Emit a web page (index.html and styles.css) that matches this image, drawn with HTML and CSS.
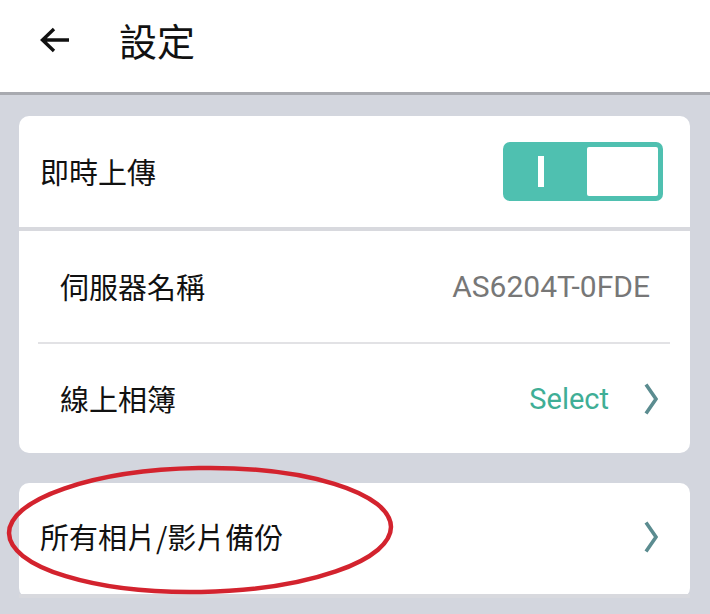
FILE: index.html
```html
<!DOCTYPE html>
<html lang="zh-Hant">
<head>
  <meta charset="UTF-8">
  <meta name="viewport" content="width=device-width, initial-scale=1.0">
  <title>設定</title>
  <link rel="stylesheet" href="styles.css">
</head>
<body>
  <header class="topbar">
    <svg class="back" width="32" height="28" viewBox="0 0 32 28">
      <path d="M30 14H4M15 3L3.5 14L15 25" fill="none" stroke="#111" stroke-width="3.4" stroke-linecap="butt" stroke-linejoin="miter"/>
    </svg>
    <h1 class="title">設定</h1>
  </header>

  <main class="content">
    <div class="card">
      <div class="row row-main">
        <span class="label">即時上傳</span>
        <div class="toggle">
          <span class="toggle-bar"></span>
          <span class="toggle-knob"></span>
        </div>
      </div>
      <div class="row row-sub">
        <span class="label">伺服器名稱</span>
        <span class="value">AS6204T-0FDE</span>
      </div>
      <div class="divider"></div>
      <div class="row row-sub row-last">
        <span class="label">線上相簿</span>
        <span class="select">Select</span>
        <svg class="chevron" width="14" height="32" viewBox="0 0 14 32">
          <path d="M2 1.5L12 16L2 30.5" fill="none" stroke="#5b8c90" stroke-width="3.6"/>
        </svg>
      </div>
    </div>

    <div class="card card-backup">
      <div class="row row-main row-last">
        <span class="label">所有相片/影片備份</span>
        <svg class="chevron" width="14" height="32" viewBox="0 0 14 32">
          <path d="M2 1.5L12 16L2 30.5" fill="none" stroke="#5b8c90" stroke-width="3.6"/>
        </svg>
      </div>
      <svg class="circle-mark" width="400" height="140" viewBox="0 0 400 140">
        <ellipse cx="200" cy="65" rx="191" ry="62" fill="none" stroke="#d3232e" stroke-width="4.5" transform="rotate(-1 200 65)"/>
      </svg>
    </div>
  </main>
</body>
</html>
```

FILE: styles.css
```css
body {
  margin: 0;
  padding: 0;
  width: 710px;
  height: 614px;
  overflow: hidden;
  background-color: #d3d6de;
  font-family: "Noto Sans CJK TC", "Noto Sans", sans-serif;
  color: #111;
}
.topbar {
  display: flex;
  align-items: center;
  height: 92px;
  background-color: #fff;
  border-bottom: 3px solid #a8aab0;
  padding-left: 39px;
  box-sizing: content-box;
}
.back {
  display: block;
  margin-top: -12px;
}
.title {
  margin: -12px 0 0 48px;
  font-size: 38px;
  font-weight: 400;
  line-height: 1;
}
.content {
  padding: 21px 20px 0 19px;
}
.card {
  background-color: #fff;
  border-radius: 10px;
  position: relative;
}
.row {
  display: flex;
  align-items: center;
  height: 111px;
  box-sizing: border-box;
}
.row-main {
  padding: 0 27px 0 21px;
}
.row-main:first-child {
  border-bottom: 4px solid #d8d9de;
  height: 115px;
}
.row-sub {
  padding: 0 40px 0 41px;
}
.row-last {
  height: 109px;
}
.card-backup .row-last {
  padding-bottom: 4px;
}
.label {
  font-size: 29px;
  line-height: 1;
  flex: 1;
}
.value {
  font-family: Roboto, "Liberation Sans", sans-serif;
  font-size: 30px;
  color: #777;
}
.select {
  font-family: Roboto, "Liberation Sans", sans-serif;
  font-size: 29px;
  color: #3fae96;
  margin-right: 35px;
}
.row-last .chevron {
  margin-right: -8px;
}
.card-backup .chevron {
  margin-right: 5px;
}
.divider {
  height: 2px;
  margin: 0 20px 0 19px;
  background-color: #e2e2e5;
}
.toggle {
  display: flex;
  align-items: center;
  width: 160px;
  height: 59px;
  box-sizing: border-box;
  padding: 5px;
  border-radius: 7px;
  background-color: #4fc0b0;
}
.toggle-bar {
  width: 6px;
  height: 31px;
  background-color: #fff;
  margin-left: 30px;
  flex: none;
}
.toggle-knob {
  width: 71px;
  height: 49px;
  margin-left: auto;
  border-radius: 2px;
  background-color: #fff;
}
.card-backup {
  margin-top: 30px;
}
.circle-mark {
  position: absolute;
  left: -19px;
  top: -18px;
  pointer-events: none;
}
```
